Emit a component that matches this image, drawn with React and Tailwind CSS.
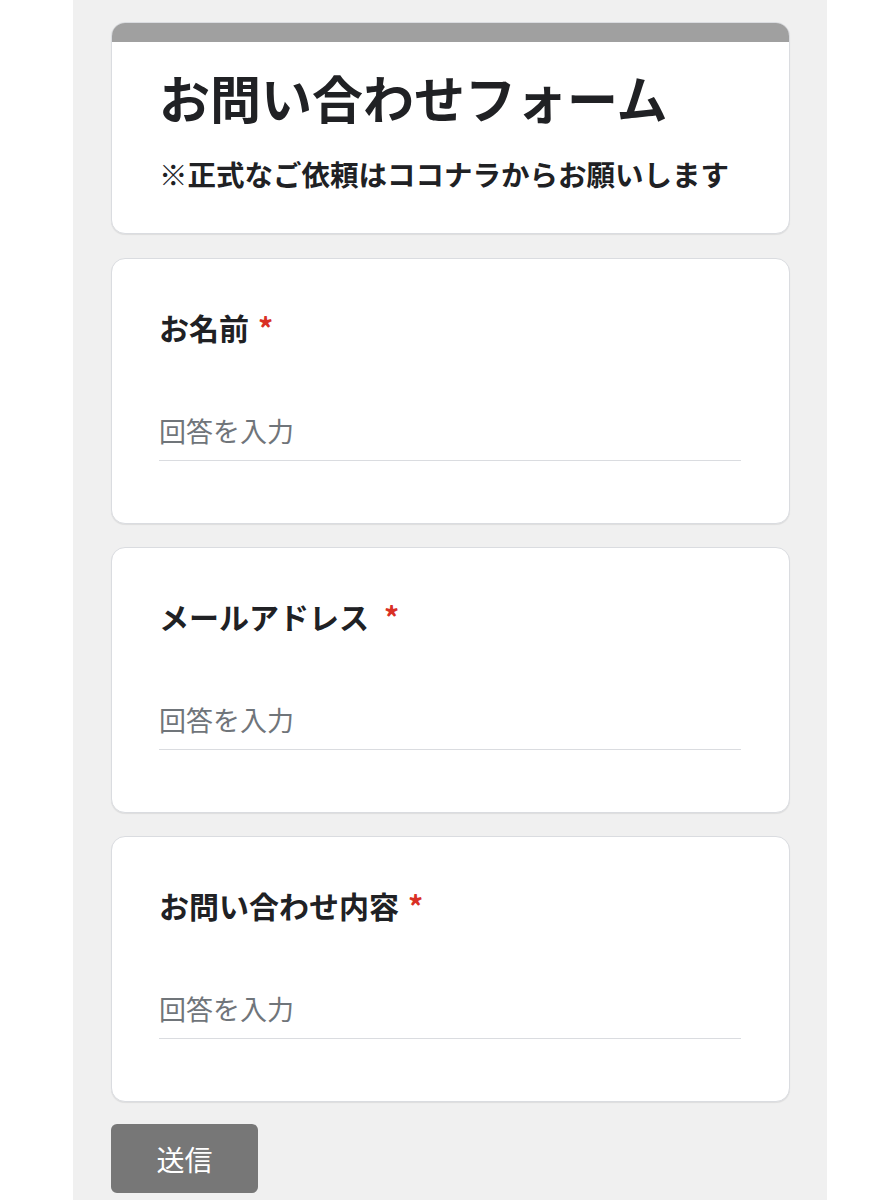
import React from 'react';

const font = { fontFamily: '"Noto Sans CJK JP", "Noto Sans", sans-serif' };

function Question({ label, spaced }) {
  return (
    <div className="bg-white border border-[#dadce0] rounded-[14px] shadow-[0_1px_1px_rgba(0,0,0,0.08)] pt-[48px] pb-[62px] px-[47px]">
      <div className="flex items-center text-[30px] leading-[40px] font-bold text-[#202124]">
        <span>{label}</span>
        <span className={`text-[#d93025] ${spaced ? 'ml-[15px]' : 'ml-[9px]'}`}>*</span>
      </div>
      <div className="mt-[66px] w-[582px] border-b border-[#dadce0] pb-[11px]">
        <div className="text-[27px] leading-[36px] text-[#70757a]">回答を入力</div>
      </div>
    </div>
  );
}

export default function App() {
  return (
    <div className="min-h-[1200px] bg-white" style={font}>
      <div className="ml-[73px] w-[754px] min-h-[1200px] bg-[#f0f0f0] px-[38px] pt-[22px] pb-[10px]">
        <div className="w-[679px] flex flex-col">
          {/* Header */}
          <div className="rounded-[14px] overflow-hidden border border-[#dadce0] bg-white shadow-[0_1px_1px_rgba(0,0,0,0.08)]">
            <div className="h-[20px] bg-[#a0a0a0] -mt-px -mx-px" />
            <div className="px-[47px] pt-[23px] pb-[39px]">
              <h1 className="text-[51px] leading-[65px] font-bold text-[#202124]">お問い合わせフォーム</h1>
              <p className="mt-[24px] text-[28.5px] leading-[40px] font-bold text-[#202124]">
                ※正式なご依頼はココナラからお願いします
              </p>
            </div>
          </div>

          <div className="mt-[24px] flex flex-col gap-[23px]">
            <Question label="お名前" />
            <Question label="メールアドレス" spaced />
            <Question label="お問い合わせ内容" />
          </div>

          <div className="mt-[22px]">
            <button className="w-[147px] h-[69px] rounded-[6px] bg-[#777777] text-white text-[28px]">
              送信
            </button>
          </div>
        </div>
      </div>
    </div>
  );
}
